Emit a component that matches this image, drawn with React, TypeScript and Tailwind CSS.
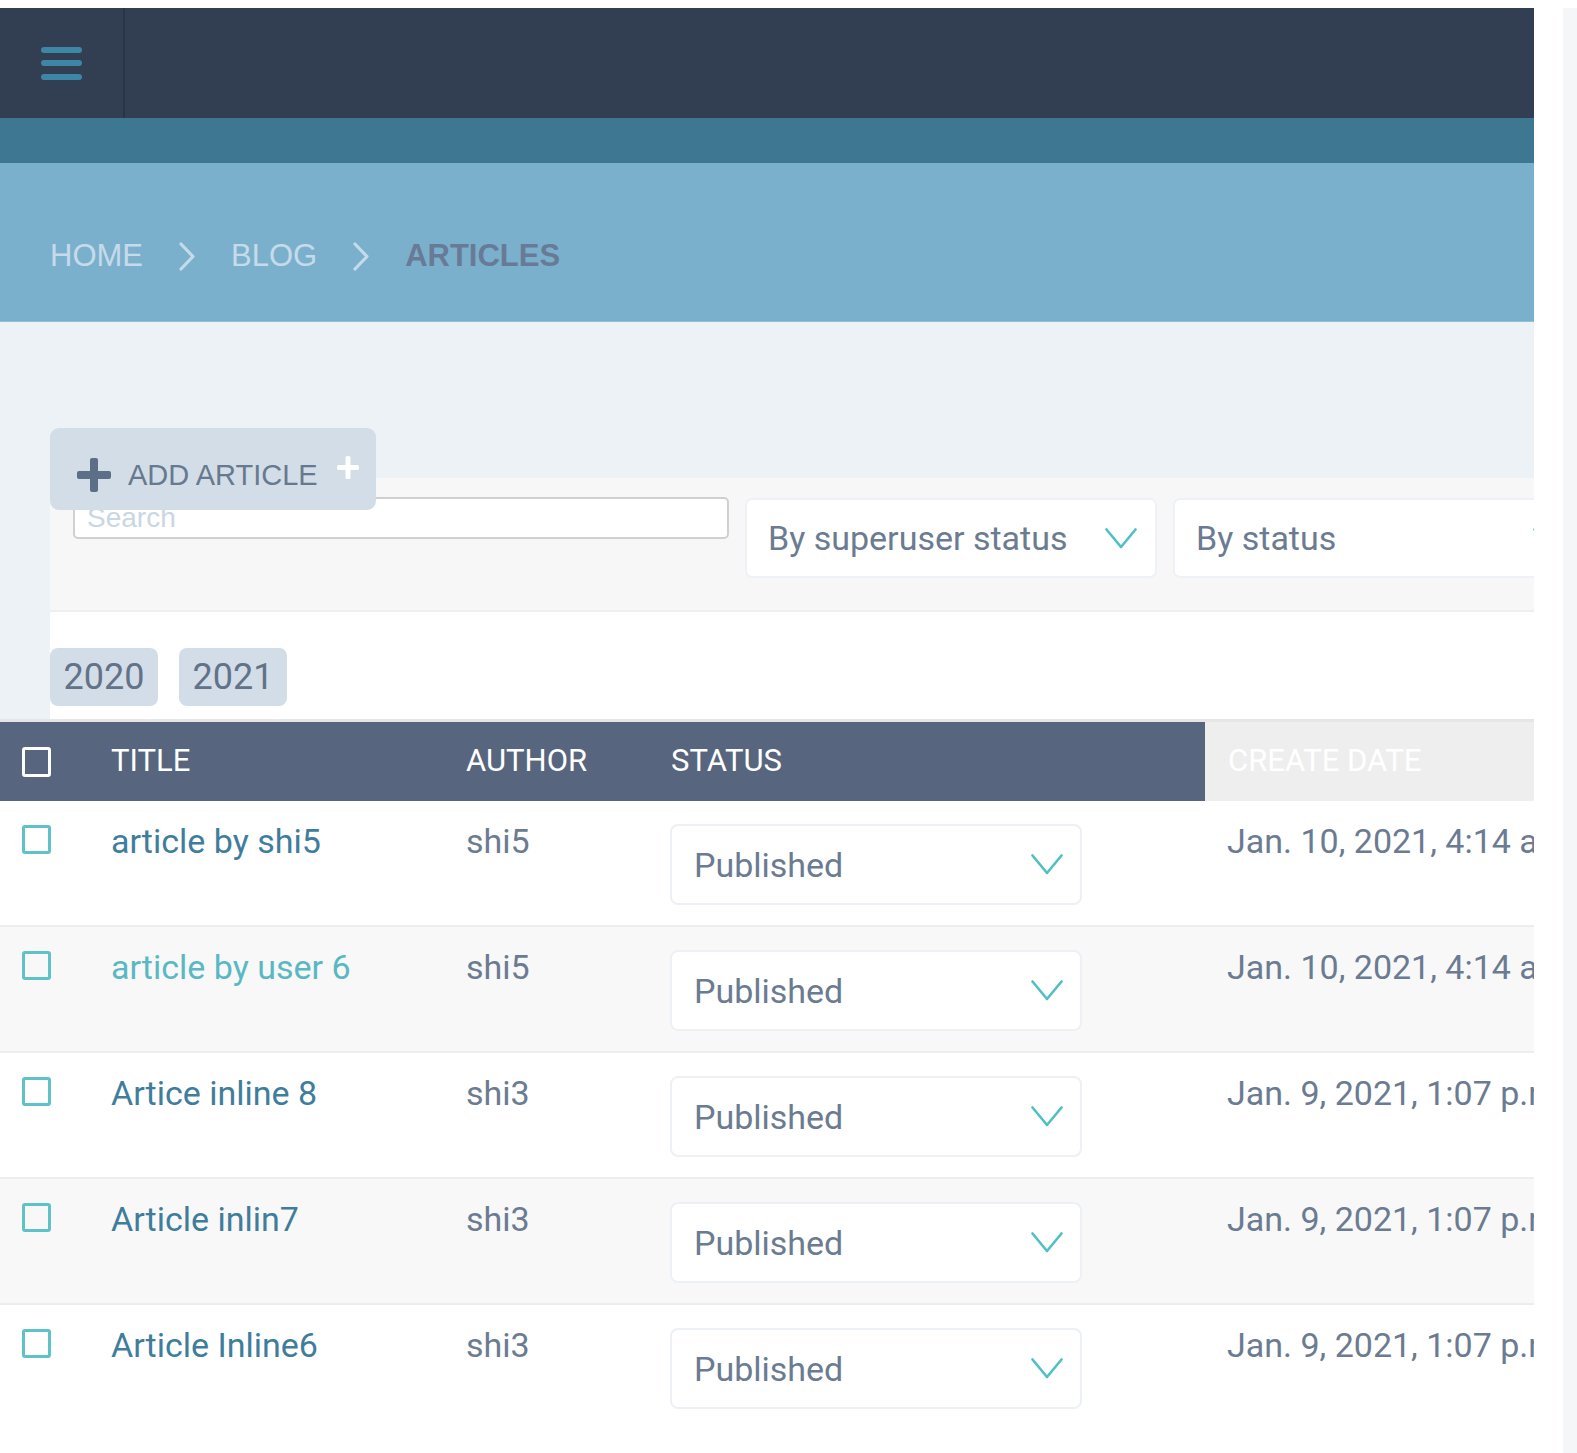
import React from "react";

const rows = [
  { title: "article by shi5", author: "shi5", date: "Jan. 10, 2021, 4:14 a.m.", visited: false },
  { title: "article by user 6", author: "shi5", date: "Jan. 10, 2021, 4:14 a.m.", visited: true },
  { title: "Artice inline 8", author: "shi3", date: "Jan. 9, 2021, 1:07 p.m.", visited: false },
  { title: "Article inlin7", author: "shi3", date: "Jan. 9, 2021, 1:07 p.m.", visited: false },
  { title: "Article Inline6", author: "shi3", date: "Jan. 9, 2021, 1:07 p.m.", visited: false },
];

function Chevron() {
  return (
    <svg width="32" height="21" viewBox="0 0 32 21" fill="none" className="shrink-0">
      <polyline points="1.5,1.5 16,19 30.5,1.5" stroke="#4fc0c5" strokeWidth="2.6" strokeLinejoin="round" strokeLinecap="round" />
    </svg>
  );
}

function CrumbArrow() {
  return (
    <svg width="18" height="30" viewBox="0 0 18 30" fill="none" className="shrink-0">
      <polyline points="3,3 15,15.5 3,28" stroke="#c5dbe9" strokeWidth="3.2" strokeLinecap="round" strokeLinejoin="round" />
    </svg>
  );
}

export default function App() {
  return (
    <div className="min-h-screen bg-white pt-[8px] flex font-['Roboto',sans-serif]">
      <main className="w-[1534px] shrink-0 overflow-hidden whitespace-nowrap">
        {/* top dark header */}
        <header className="h-[110px] bg-[#323e52] flex">
          <div className="w-[125px] border-r-2 border-[#29344a] flex flex-col items-center justify-center gap-[7.5px]">
            <div className="w-[41px] h-[6px] rounded-full bg-[#3d86a6]" />
            <div className="w-[41px] h-[6px] rounded-full bg-[#3d86a6]" />
            <div className="w-[41px] h-[6px] rounded-full bg-[#3d86a6]" />
          </div>
        </header>
        <div className="h-[45px] bg-[#3e7792]" />
        {/* breadcrumbs */}
        <nav className="h-[159px] bg-[#7bb0cd] border-b border-[#93c0d8] flex items-center pl-[50px] pt-[28px] font-['Liberation_Sans',Arial,sans-serif] text-[31px] leading-[36px]">
          <span className="text-[#c5dbe9]">HOME</span>
          <span className="ml-[35px] mr-[35px] flex"><CrumbArrow /></span>
          <span className="text-[#c5dbe9]">BLOG</span>
          <span className="ml-[35px] mr-[35px] flex"><CrumbArrow /></span>
          <span className="text-[#687b96] font-bold">ARTICLES</span>
        </nav>

        {/* content */}
        <section className="relative bg-[#edf2f6] pt-[156px] pl-[50px]">
          <button className="absolute z-10 left-[50px] top-[106px] w-[326px] h-[82px] rounded-[9px] bg-[#d3dde7] flex items-center pl-[27px] pt-[12px] font-['Liberation_Sans',Arial,sans-serif]">
            <svg width="34" height="34" viewBox="0 0 34 34" className="shrink-0">
              <rect x="13" y="0" width="8" height="34" rx="2" fill="#5d6f86" />
              <rect x="0" y="13" width="34" height="8" rx="2" fill="#5d6f86" />
            </svg>
            <span className="ml-[17px] text-[29px] leading-[32px] text-[#67798f]">ADD ARTICLE</span>
            <svg width="22" height="23" viewBox="0 0 22 23" className="ml-[19px] mb-[16px] shrink-0">
              <rect x="8.5" y="0" width="5" height="23" rx="1.5" fill="#ffffff" />
              <rect x="0" y="9" width="22" height="5" rx="1.5" fill="#ffffff" />
            </svg>
          </button>

          {/* filter bar */}
          <div className="h-[134px] bg-[#f7f7f7] border-b-2 border-[#edf0f3] flex items-start gap-[16px] pt-[19px] pl-[23px]">
            <input
              readOnly
              placeholder="Search"
              className="w-[656px] h-[42px] shrink-0 border-2 border-[#d0d0d0] rounded-[5px] bg-white px-[12px] font-['Liberation_Sans',Arial,sans-serif] text-[28px] outline-none placeholder:text-[#c9d6e4]"
            />
            <div className="mt-[1px] w-[412px] h-[80px] shrink-0 rounded-[7px] bg-white border-2 border-[#eef2f6] flex items-center justify-between pl-[21px] pr-[18px]">
              <span className="text-[34px] text-[#6b7b92]">By superuser status</span>
              <Chevron />
            </div>
            <div className="mt-[1px] w-[412px] h-[80px] shrink-0 rounded-[7px] bg-white border-2 border-[#eef2f6] flex items-center justify-between pl-[21px] pr-[18px]">
              <span className="text-[34px] text-[#6b7b92]">By status</span>
              <Chevron />
            </div>
          </div>

          {/* date hierarchy */}
          <div className="h-[107px] bg-white flex items-start gap-[21px] pt-[36px]">
            <span className="w-[108px] h-[58px] rounded-[8px] bg-[#d3dde7] flex items-center justify-center text-[36px] text-[#627288]">2020</span>
            <span className="w-[108px] h-[58px] rounded-[8px] bg-[#d3dde7] flex items-center justify-center text-[36px] text-[#627288]">2021</span>
          </div>
        </section>

        {/* table */}
        <div className="border-t-[3px] border-[#e6e6e6] bg-white">
          <div className="grid grid-cols-[111px_355px_204px_535px_1fr] h-[79px] text-[31px] text-white">
            <div className="bg-[#57657e] flex items-center pl-[22px]">
              <span className="w-[29px] h-[30px] border-[3px] border-white rounded-[3px]" />
            </div>
            <div className="bg-[#57657e] flex items-center">TITLE</div>
            <div className="bg-[#57657e] flex items-center">AUTHOR</div>
            <div className="bg-[#57657e] flex items-center pl-[1px]">STATUS</div>
            <div className="bg-[#eeeeee] flex items-center pl-[23px]">CREATE DATE</div>
          </div>
          {rows.map((r, i) => (
            <div
              key={i}
              className={`grid grid-cols-[111px_355px_204px_535px_1fr] h-[126px] border-b-2 border-[#ededed] last:border-b-0 text-[34px] leading-[40px] ${i % 2 === 1 ? "bg-[#f8f8f8]" : "bg-white"}`}
            >
              <div className="pl-[22px] pt-[24px]">
                <span className="block w-[29px] h-[29px] border-[3px] border-[#5ec2c8] rounded-[3px]" />
              </div>
              <div className={`pt-[20px] ${r.visited ? "text-[#59b8c4]" : "text-[#3f7d9d]"}`}>{r.title}</div>
              <div className="pt-[20px] text-[#6b7b92]">{r.author}</div>
              <div className="pt-[23px]">
                <div className="w-[412px] h-[81px] rounded-[8px] bg-white border-2 border-[#edf1f5] flex items-center justify-between pl-[22px] pr-[17px]">
                  <span className="text-[#6b7b92]">Published</span>
                  <Chevron />
                </div>
              </div>
              <div className="pt-[20px] pl-[22px] text-[#6b7b92]">{r.date}</div>
            </div>
          ))}
        </div>
      </main>
      <div className="flex-1" />
      <div className="w-[14px] bg-[#f5f6f8]" />
    </div>
  );
}
